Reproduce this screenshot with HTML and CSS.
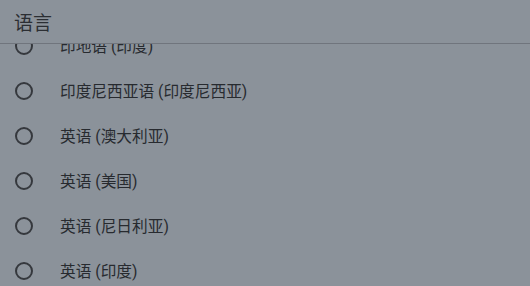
FILE: index.html
```html
<!DOCTYPE html>
<html lang="zh-CN">
<head>
    <meta charset="UTF-8">
    <meta name="viewport" content="width=device-width, initial-scale=1.0">
    <title>语言</title>
    <link rel="stylesheet" href="styles.css">
</head>
<body>
    <div class="dialog">
        <!-- Dialog title -->
        <header class="dialog-title">语言</header>

        <!-- Language list, scrolled a little -->
        <div class="lang-list">
            <ul class="lang-items">
                <li class="lang-item"><span class="radio"></span><span class="lang-name">印地语 (印度)</span></li>
                <li class="lang-item"><span class="radio"></span><span class="lang-name">印度尼西亚语 (印度尼西亚)</span></li>
                <li class="lang-item"><span class="radio"></span><span class="lang-name">英语 (澳大利亚)</span></li>
                <li class="lang-item"><span class="radio"></span><span class="lang-name">英语 (美国)</span></li>
                <li class="lang-item"><span class="radio"></span><span class="lang-name">英语 (尼日利亚)</span></li>
                <li class="lang-item"><span class="radio"></span><span class="lang-name">英语 (印度)</span></li>
                <li class="lang-item"><span class="radio"></span><span class="lang-name">英语 (英国)</span></li>
            </ul>
        </div>
    </div>
</body>
</html>
```

FILE: styles.css
```css
/* Global styles */
html, body {
    height: 100%;
}

body {
    margin: 0;
    padding: 0;
    font-family: Roboto, "Noto Sans CJK SC", sans-serif;
    background-color: #8b929a; /* Dimmed grey */
    color: #272a2f;
    overflow: hidden;
}

.dialog {
    display: flex;
    flex-direction: column;
    height: 100%;
}

/* Title bar */
.dialog-title {
    height: 44px;
    box-sizing: border-box;
    padding: 13px 0 0 14px;
    font-size: 19px;
    line-height: 22px;
    color: #2b2e33;
    border-bottom: 1px solid #70757d;
}

/* List */
.lang-list {
    flex: 1;
    overflow: hidden;
}

.lang-items {
    list-style: none;
    margin: -21px 0 0 0; /* scrolled */
    padding: 0;
}

.lang-item {
    display: flex;
    align-items: center;
    height: 45px;
    padding-left: 15px;
}

.radio {
    width: 18px;
    height: 18px;
    box-sizing: border-box;
    border: 2px solid #35383d;
    border-radius: 50%;
    flex-shrink: 0;
}

.lang-name {
    margin-left: 27px;
    font-size: 15.7px;
    line-height: 20px;
    padding-top: 2px;
}
```
